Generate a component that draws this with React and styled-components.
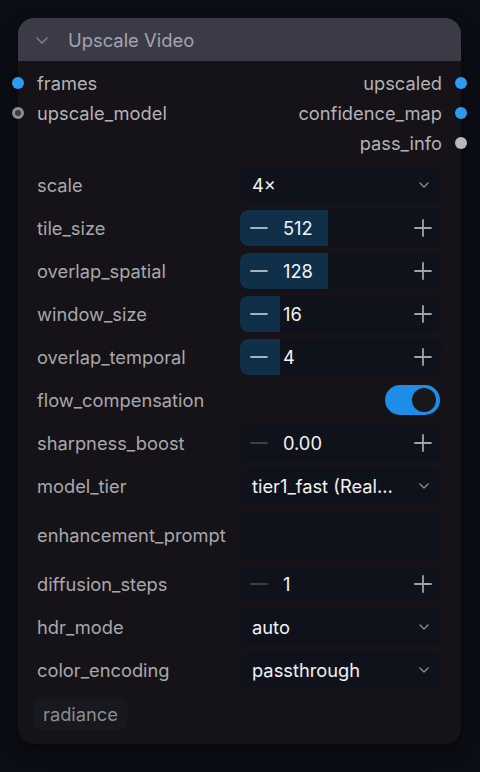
import React from 'react';
import styled, { createGlobalStyle } from 'styled-components';

const GlobalStyle = createGlobalStyle`
  html, body {
    margin: 0;
    padding: 0;
    background: #0c0e15;
    font-family: Inter, "Noto Sans", sans-serif;
  }
`;

const Page = styled.div`
  padding: 18px 19px 28px 18px;
`;

const Card = styled.div`
  position: relative;
  width: 443px;
  background: #151318;
  border-radius: 16px;
  box-shadow: 0 6px 18px rgba(0, 0, 0, 0.55);
  padding-bottom: 14px;
`;

const Header = styled.div`
  height: 43px;
  display: flex;
  align-items: center;
  gap: 19px;
  padding-left: 17px;
  background: #3b3b47;
  border-radius: 16px 16px 0 0;
  color: #a3a3ae;
  font-size: 18.4px;
`;

const Slots = styled.div`
  padding: 7px 0 0;
  display: grid;
  grid-template-columns: 1fr 1fr;
  grid-auto-rows: 30px;
`;

const Slot = styled.div`
  position: relative;
  display: flex;
  align-items: center;
  justify-content: ${(p) => (p.$out ? 'flex-end' : 'flex-start')};
  padding: 0 19px;
  font-size: 18.3px;
  color: #b2b2b6;
  grid-column: ${(p) => (p.$out ? 2 : 1)};
  white-space: nowrap;
`;

const Dot = styled.span`
  position: absolute;
  top: 50%;
  ${(p) => (p.$out ? 'right: -6px;' : 'left: -6px;')}
  width: 12px;
  height: 12px;
  margin-top: -6px;
  border-radius: 50%;
  box-sizing: border-box;
  background: ${(p) => p.$color};
  ${(p) => p.$ring && 'border: 3.5px solid #8e8e92; background: #3a3a3e;'}
`;

const Widgets = styled.div`
  margin-top: 9px;
  padding: 0 19px;
  display: flex;
  flex-direction: column;
  gap: 7px;
`;

const Row = styled.div`
  display: grid;
  grid-template-columns: 1fr 202px;
  align-items: center;
  min-height: 36px;
`;

const Label = styled.div`
  font-size: 18.3px;
  color: #a8a8ac;
  white-space: nowrap;
`;

const Box = styled.div`
  position: relative;
  height: ${(p) => p.$h || 36}px;
  background: #0f121a;
  border-radius: 8px;
  display: flex;
  align-items: center;
  overflow: hidden;
  color: #f2f2f4;
  font-size: 18.3px;
`;

const SelectText = styled.span`
  flex: 1;
  padding-left: 12px;
  white-space: nowrap;
  overflow: hidden;
`;

const Chevron = styled.svg`
  flex: none;
  width: 12px;
  height: 12px;
  margin: 0 12px 0 16px;
`;

const Fill = styled.div`
  position: absolute;
  left: 0;
  top: 0;
  bottom: 0;
  background: #10304a;
  border-radius: 8px 0 0 8px;
`;

const StepBtn = styled.svg`
  position: relative;
  flex: none;
  width: 18px;
  height: 18px;
  margin: ${(p) => (p.$plus ? '0 10px 0 0' : '0 15px 0 10px')};
`;

const Value = styled.span`
  position: relative;
  flex: 1;
`;

const ToggleWrap = styled.div`
  display: flex;
  justify-content: flex-end;
  padding-right: 2px;
`;

const Toggle = styled.div`
  width: 55px;
  height: 30px;
  border-radius: 15px;
  background: #1e8de8;
  display: flex;
  align-items: center;
  justify-content: flex-end;
  padding-right: 4px;
  box-sizing: border-box;
`;

const Knob = styled.div`
  width: 24px;
  height: 24px;
  border-radius: 50%;
  background: #18181c;
`;

const Chip = styled.div`
  align-self: flex-start;
  margin: 2px 0 0 -4px;
  padding: 0 10px;
  height: 33px;
  display: flex;
  align-items: center;
  border-radius: 9px;
  background: #17191f;
  color: #8c8c90;
  font-size: 18.3px;
`;

const Select = ({ value }) => (
  <Box>
    <SelectText>{value}</SelectText>
    <Chevron viewBox="0 0 12 12">
      <polyline points="2,4 6,8 10,4" fill="none" stroke="#8a8a90" strokeWidth="1.4" strokeLinecap="round" strokeLinejoin="round" />
    </Chevron>
  </Box>
);

const Number = ({ value, fill, dim }) => (
  <Box>
    {fill ? <Fill style={{ width: fill }} /> : null}
    <StepBtn viewBox="0 0 18 18">
      <line x1="1" y1="9" x2="17" y2="9" stroke={dim ? '#3c3e44' : '#a8b0ba'} strokeWidth="1.8" strokeLinecap="round" />
    </StepBtn>
    <Value>{value}</Value>
    <StepBtn $plus viewBox="0 0 18 18">
      <line x1="1" y1="9" x2="17" y2="9" stroke="#a0a4aa" strokeWidth="1.8" strokeLinecap="round" />
      <line x1="9" y1="1" x2="9" y2="17" stroke="#a0a4aa" strokeWidth="1.8" strokeLinecap="round" />
    </StepBtn>
  </Box>
);

const App = () => (
  <>
    <GlobalStyle />
    <Page>
      <Card>
        <Header>
          <svg width="14" height="14" viewBox="0 0 14 14">
            <polyline points="2,5 7,10 12,5" fill="none" stroke="#7e7e8c" strokeWidth="1.6" strokeLinecap="round" strokeLinejoin="round" />
          </svg>
          <span>Upscale Video</span>
        </Header>

        <Slots>
          <Slot>
            <Dot $color="#2d9bf0" />frames
          </Slot>
          <Slot $out>
            upscaled<Dot $out $color="#2d9bf0" />
          </Slot>
          <Slot>
            <Dot $ring />upscale_model
          </Slot>
          <Slot $out>
            confidence_map<Dot $out $color="#2d9bf0" />
          </Slot>
          <Slot $out>
            pass_info<Dot $out $color="#b9b9bc" />
          </Slot>
        </Slots>

        <Widgets>
          <Row><Label>scale</Label><Select value="4×" /></Row>
          <Row><Label>tile_size</Label><Number value="512" fill={88} /></Row>
          <Row><Label>overlap_spatial</Label><Number value="128" fill={88} /></Row>
          <Row><Label>window_size</Label><Number value="16" fill={40} /></Row>
          <Row><Label>overlap_temporal</Label><Number value="4" fill={40} /></Row>
          <Row>
            <Label>flow_compensation</Label>
            <ToggleWrap><Toggle><Knob /></Toggle></ToggleWrap>
          </Row>
          <Row><Label>sharpness_boost</Label><Number value="0.00" dim /></Row>
          <Row><Label>model_tier</Label><Select value="tier1_fast (Real…" /></Row>
          <Row><Label>enhancement_prompt</Label><Box $h={48} /></Row>
          <Row><Label>diffusion_steps</Label><Number value="1" dim /></Row>
          <Row><Label>hdr_mode</Label><Select value="auto" /></Row>
          <Row><Label>color_encoding</Label><Select value="passthrough" /></Row>
          <Chip>radiance</Chip>
        </Widgets>
      </Card>
    </Page>
  </>
);

export default App;
